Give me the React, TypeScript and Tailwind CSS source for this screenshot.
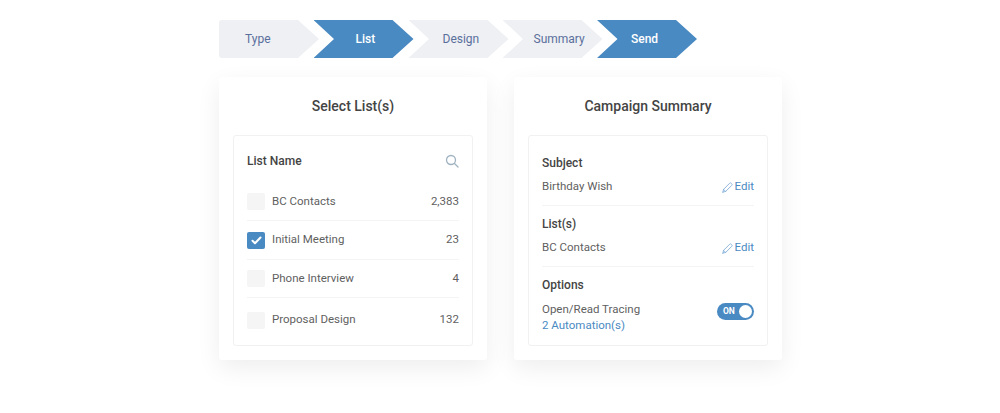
import React from "react";

const font = { fontFamily: "Roboto, sans-serif" };

function Pencil() {
  return (
    <svg width="11" height="11" viewBox="0 0 12 12" fill="none" stroke="#7aa9d6" strokeWidth="0.9" strokeLinejoin="round" strokeLinecap="round">
      <path d="M1 11l.7-3L8.4 1.300a1.100 1.100 0 0 1 1.600 0l.7.7a1.100 1.100 0 0 1 0 1.600L4 10.300 1 11z" />
      <path d="M1.700 8L4 10.300" />
    </svg>
  );
}

function Check({ on }: { on?: boolean }) {
  return on ? (
    <span className="flex h-[17px] w-[18px] shrink-0 items-center justify-center rounded-[2px] bg-[#4a8ac2]">
      <svg width="11" height="9" viewBox="0 0 11 9" fill="none" stroke="#fff" strokeWidth="2" strokeLinecap="round" strokeLinejoin="round">
        <path d="M1.500 4.700L4 7.200 9.500 1.500" />
      </svg>
    </span>
  ) : (
    <span className="h-[17px] w-[18px] shrink-0 rounded-[2px] bg-[#f5f5f5]" />
  );
}

function Row({ name, count, on, cls }: { name: string; count: string; on?: boolean; cls: string }) {
  return (
    <div className={`flex items-center text-[11.5px] text-[#5f5f5f] ${cls}`}>
      <Check on={on} />
      <span className="ml-[7px] flex-1">{name}</span>
      <span>{count}</span>
    </div>
  );
}

function Step({ label, active, cls, first }: { label: string; active?: boolean; cls: string; first?: boolean }) {
  return (
    <div
      className={`flex h-[38px] w-[100px] items-center text-[12px] ${active ? "bg-[#4a8ac2] font-medium text-white" : "bg-[#eef0f3] text-[#5a6f9c]"} ${first ? "rounded-l-[3px] [clip-path:polygon(0_0,79%_0,100%_50%,79%_100%,0_100%)]" : "[clip-path:polygon(0_0,79%_0,100%_50%,79%_100%,0_100%,20.500%_50%)]"} ${cls}`}
    >
      {label}
    </div>
  );
}

function Card({ title, children }: { title: string; children: React.ReactNode }) {
  return (
    <section className="flex h-[283px] w-[268px] flex-col rounded-[3px] bg-white px-[14px] shadow-[0_8px_24px_rgba(0,0,0,0.07)]">
      <h2 className="flex h-[58px] items-center justify-center text-[14px] font-medium text-[#444]">{title}</h2>
      <div className="flex-1 mb-[14px] rounded-[3px] border border-[#f1f1f1] px-[13px]">{children}</div>
    </section>
  );
}

function Edit() {
  return (
    <span className="flex items-center gap-[2px] text-[11.500px] text-[#4a8ac2]">
      <Pencil />
      Edit
    </span>
  );
}

export default function App() {
  return (
    <div style={font} className="h-[413px] w-[1000px] overflow-hidden bg-white pl-[219px] pt-[20px]">
      <div className="flex">
        <Step first label="Type" cls="pl-[26px]" />
        <Step active label="List" cls="-ml-[5.500px] pl-[42px]" />
        <Step label="Design" cls="-ml-[5px] pl-[34px]" />
        <Step label="Summary" cls="-ml-[6px] pl-[31px]" />
        <Step active label="Send" cls="-ml-[5.500px] pl-[34px]" />
      </div>

      <div className="mt-[19px] flex gap-[27px]">
        <Card title="Select List(s)">
          <div className="flex h-[47px] items-center justify-between pt-[3px] text-[12px] font-medium text-[#444]">
            <span>List Name</span>
            <svg width="14" height="14" viewBox="0 0 14 14" fill="none" stroke="#9fb3c1" strokeWidth="1.300" strokeLinecap="round">
              <circle cx="6" cy="6" r="4.500" />
              <path d="M9.500 9.500L13 13" />
            </svg>
          </div>
          <Row name="BC Contacts" count="2,383" cls="h-[38px] border-b border-[#f4f4f4]" />
          <Row on name="Initial Meeting" count="23" cls="h-[39px] border-b border-[#f4f4f4]" />
          <Row name="Phone Interview" count="4" cls="h-[38px] border-b border-[#f4f4f4]" />
          <Row name="Proposal Design" count="132" cls="h-[44px]" />
        </Card>

        <Card title="Campaign Summary">
          <div className="pt-[20px]">
            <div className="border-b border-[#f4f4f4] pb-[11px]">
              <h3 className="text-[12px] leading-[14px] font-medium text-[#444]">Subject</h3>
              <div className="mt-[10px] flex h-[14px] items-center justify-between text-[11.500px] text-[#5f5f5f]">
                <span>Birthday Wish</span>
                <Edit />
              </div>
            </div>
            <div className="border-b border-[#f4f4f4] pt-[11px] pb-[11px]">
              <h3 className="text-[12px] leading-[14px] font-medium text-[#444]">List(s)</h3>
              <div className="mt-[10px] flex h-[14px] items-center justify-between text-[11.500px] text-[#5f5f5f]">
                <span>BC Contacts</span>
                <Edit />
              </div>
            </div>
            <div className="pt-[11px]">
              <h3 className="text-[12px] leading-[14px] font-medium text-[#444]">Options</h3>
              <div className="mt-[10px] flex items-start justify-between text-[11.500px]">
                <div>
                  <div className="leading-[14px] text-[#5f5f5f]">Open/Read Tracing</div>
                  <div className="mt-[2px] leading-[14px] text-[#4a8ac2]">2 Automation(s)</div>
                </div>
                <span className="mt-[1px] flex h-[17px] w-[37px] items-center justify-between rounded-full bg-[#4a8ac2] pl-[6px] pr-[2px] text-[8.500px] font-bold text-white">
                  ON
                  <span className="h-[13px] w-[13px] rounded-full bg-white" />
                </span>
              </div>
            </div>
          </div>
        </Card>
      </div>
    </div>
  );
}
